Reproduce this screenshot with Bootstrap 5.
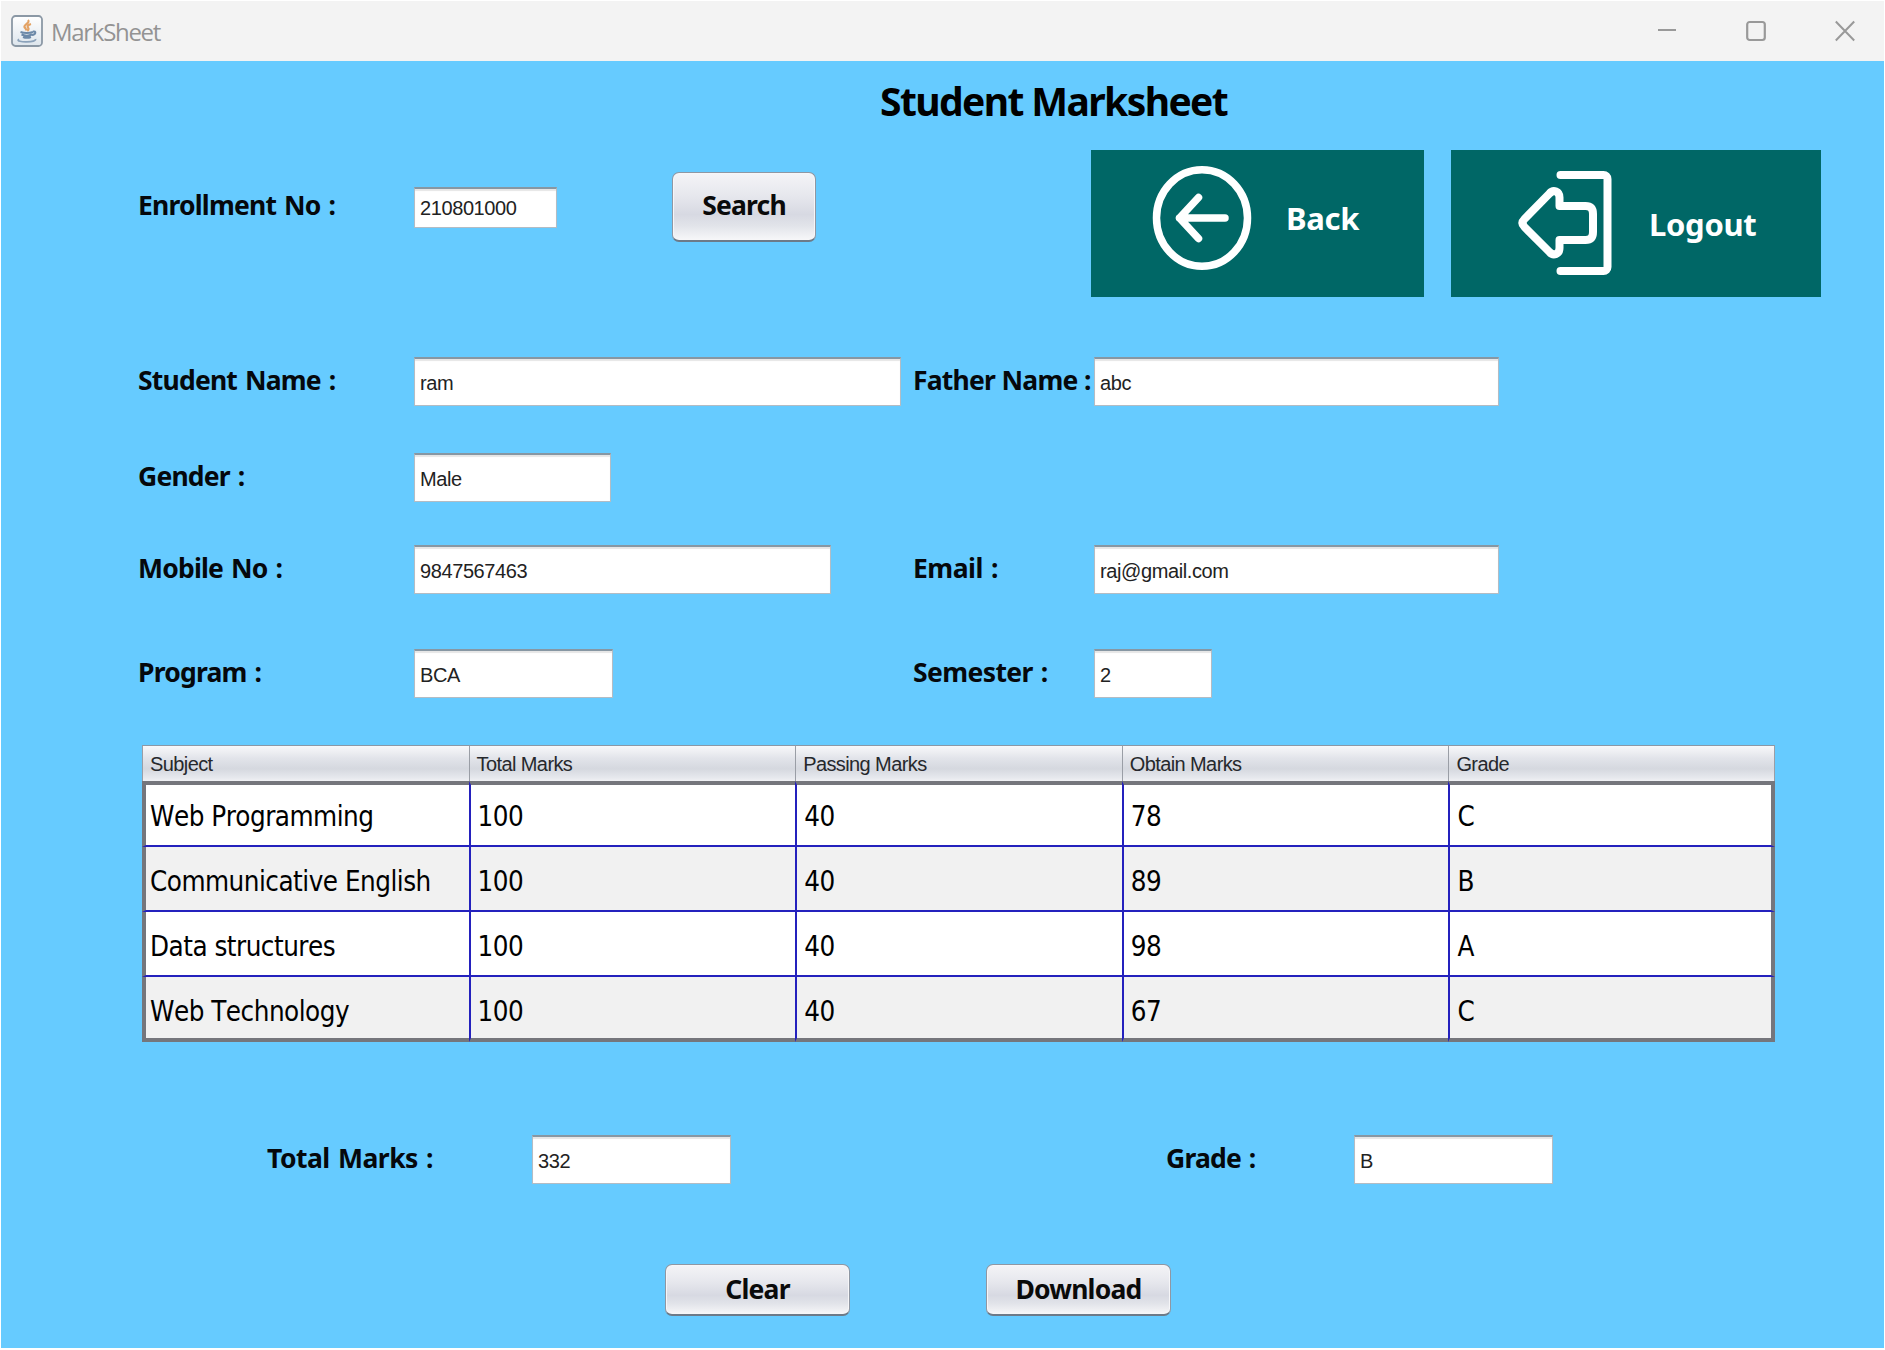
<!DOCTYPE html>
<html lang="en">
<head>
<meta charset="utf-8">
<title>MarkSheet</title>
<meta name="viewport" content="width=device-width, initial-scale=1">
<link href="https://cdn.jsdelivr.net/npm/bootstrap@5.3.0/dist/css/bootstrap.min.css" rel="stylesheet">
<style>
  body { background: #fff; font-family: "Noto Sans", "Open Sans", sans-serif; color: #05080c; overflow: hidden; }
  .app-window { width: 1885px; height: 1350px; padding: 1px 1px 2px 1px; }
  .title-bar { height: 60px; background: #f3f3f3; padding: 0 13px 0 10px; color: #939393; }
  .title-bar .app-name { font: 24px/30px "Open Sans", sans-serif; letter-spacing: -1.3px; margin-left: 8px; padding-top: 1px; }
  .win-controls { gap: 69px; }
  .form-area { background: #66cbff; padding-left: 137px; }
  .page-title { font-size: 39px; font-weight: 700; line-height: 50px; letter-spacing: -1.6px; margin: 15px 0 0 742px; white-space: nowrap; color: #000; }
  .lbl { flex: none; font-size: 26.5px; font-weight: 700; line-height: 30px; letter-spacing: -.8px; word-spacing: 1.8px; padding-bottom: 4px; white-space: nowrap; }
  .lbl-a { width: 276px; }
  .lbl-b { width: 181px; }
  .lbl-tight { word-spacing: .5px; }
  .col-a { width: 775px; }
  .form-control.field {
    flex: none; height: 49px; border-radius: 0; padding: 3px 5px 0; background: #fff; color: #222;
    border: 1px solid #b3bcc4; border-top: 2px solid #8797a3; box-shadow: inset 0 2px 1px #e6e6e6;
    font: 20px/24px "Liberation Sans", Arial, sans-serif; letter-spacing: -.4px;
  }
  .w-enroll { width: 143px; } .w-name { width: 487px; } .w-gender { width: 197px; } .w-mobile { width: 417px; }
  .w-short { width: 199px; } .w-wide { width: 405px; } .w-sem { width: 118px; }
  .btn.metal {
    flex: none; border: 1px solid #8f97a3; border-bottom: 2px solid #6d7a88; border-radius: 7px; padding: 0 0 2px;
    font-size: 26.5px; font-weight: 700; letter-spacing: -.8px; line-height: 30px; color: #0a0a0a;
    background: linear-gradient(#f4f4f7 0%, #e6e7ed 35%, #d7d9e2 62%, #e1e3e9 78%, #f7f7f9 100%);
    box-shadow: inset 0 0 0 1px #f6f6f8;
  }
  .btn.teal { flex: none; height: 147px; border: 0; border-radius: 0; padding: 0; background: #006766; color: #fff; font-size: 31px; font-weight: 700; line-height: 40px; letter-spacing: -.3px; }
  .btn-back { width: 333px; }
  .btn-logout { width: 370px; margin-left: 27px; }
  .marks { width: 1633px; margin: 47px 0 0 4px; table-layout: fixed; border-collapse: separate; border-spacing: 0; }
  .marks th {
    height: 36px; padding: 1px 0 0 7px; border-top: 1px solid #8b98a6; border-left: 1px solid #9a9ea6;
    font: 20px/24px "Liberation Sans", Arial, sans-serif; letter-spacing: -.6px; color: #26282c;
    background: linear-gradient(#f8f8fa 0%, #e2e4ea 35%, #d5d8df 65%, #e6e8ed 90%, #f0f1f4 100%);
  }
  .marks th:last-child { border-right: 1px solid #9a9ea6; }
  .marks td {
    height: 65px; padding: 5px 0 0 7px; border-left: 2px solid #2421bd; border-bottom: 2px solid #2421bd;
    font: 27.5px/34px "DejaVu Sans Condensed", "DejaVu Sans", sans-serif; font-stretch: condensed; font-kerning: none; letter-spacing: -.5px; color: #000; background: #fff; white-space: nowrap;
  }
  .marks tbody tr:nth-child(even) td { background: #f1f1f1; }
  .marks tbody tr:first-child td { border-top: 4px solid #75767c; height: 66px; padding-top: 2px; }
  .marks tbody tr:last-child td { border-bottom: 4px solid #75767c; padding-top: 6px; }
  .marks td:first-child { border-left: 4px solid #75767c; padding-left: 4px; }
  .marks td:last-child { border-right: 4px solid #75767c; }
</style>
</head>
<body>
<div class="app-window d-flex flex-column">
  <header class="title-bar d-flex align-items-center flex-shrink-0">
    <svg width="32" height="32" viewBox="0 0 32 32" fill="none">
      <defs><linearGradient id="tile" x1="0" y1="0" x2="0" y2="1"><stop stop-color="#fff"/><stop offset="1" stop-color="#dde5ec"/></linearGradient></defs>
      <rect x="1" y="1" width="30" height="30" rx="3.5" fill="url(#tile)" stroke="#8b98a5" stroke-width="1.8"/>
      <path d="M17 5c2.500 3-4.500 4.500-3.500 7 .5 1.200 1.800 1.800 1.700 3.500M20 9c-3.500 1-4 2.500-2.800 4 1 1.200-.2 2.200-1 2.700" stroke="#e3a264" stroke-width="2.200"/>
      <path d="M9.500 17c4 1.200 8.500 1.200 12.500 0M10.500 19.500c3 1.300 7.500 1.300 10.500 0M12 22c2.500 1 5.500 1 8 0M22 16.500c3.500-.8 3 3-1 3.500" stroke="#6c89a8" stroke-width="2"/>
      <path d="M8 24.200c-3 1.800 3 2.800 8 2.600 5 0 9-1 8.500-2.800" stroke="#8ba2ba" stroke-width="1.800"/>
    </svg>
    <span class="app-name">MarkSheet</span>
    <div class="win-controls d-flex align-items-center ms-auto pe-3">
      <svg width="20" height="22" viewBox="0 0 20 22"><path d="M1 10h18" stroke="#999" stroke-width="2"/></svg>
      <svg width="20" height="22" viewBox="0 0 20 22"><rect x="1.200" y="2" width="17.600" height="18" rx="2.500" fill="none" stroke="#999" stroke-width="2.200"/></svg>
      <svg width="20" height="22" viewBox="0 0 20 22"><path d="M.8 1.500l18.400 19M19.200 1.500l-18.400 19" stroke="#999" stroke-width="2"/></svg>
    </div>
  </header>

  <main class="form-area flex-grow-1">
    <h1 class="page-title">Student Marksheet</h1>

    <div class="d-flex align-items-start" style="margin-top:24px">
      <div class="d-flex align-items-center" style="height:116px;width:953px">
        <label class="lbl lbl-a" for="enroll" style="padding-bottom:6px">Enrollment No :</label>
        <input id="enroll" class="form-control field w-enroll" style="height:41px;padding-top:0;margin-top:-1px" value="210801000">
        <button class="btn metal" style="width:144px;height:70px;margin-left:115px;margin-top:-3px">Search</button>
      </div>
      <button class="btn teal btn-back d-flex">
        <svg width="195" height="147" viewBox="0 0 195 147" fill="none" stroke="#fff" stroke-linecap="round" stroke-linejoin="round">
          <ellipse cx="111" cy="68" rx="45.500" ry="48.300" stroke-width="7.500"/>
          <path d="M107.500 47.500L88.500 68l19 20.500M88.500 68h45.500" stroke-width="7.500"/>
        </svg>
        <span style="margin-top:48px">Back</span>
      </button>
      <button class="btn teal btn-logout d-flex">
        <svg width="198" height="147" viewBox="0 0 198 147" fill="none" stroke="#fff" stroke-width="8" stroke-linecap="round" stroke-linejoin="round">
          <path d="M109.500 25h43a4 4 0 0 1 4 4v88a4 4 0 0 1-4 4h-43"/>
          <path d="M73.500 69L98.500 43.500c4-4.500 10-2 10 4V56h26q7.500 0 7.500 8v18q0 8-7.500 8h-26v8c0 6-6 8.500-10 4L73.500 77q-4-4 0-8z"/>
        </svg>
        <span style="margin-top:54px">Logout</span>
      </button>
    </div>

    <div class="d-flex align-items-center" style="margin-top:60px">
      <div class="col-a d-flex align-items-center"><label class="lbl lbl-a" for="sname">Student Name :</label><input id="sname" class="form-control field w-name" value="ram"></div>
      <label class="lbl lbl-b lbl-tight" for="fname">Father Name :</label><input id="fname" class="form-control field w-wide" value="abc">
    </div>
    <div class="d-flex align-items-center" style="margin-top:47px">
      <label class="lbl lbl-a" for="gender">Gender :</label><input id="gender" class="form-control field w-gender" value="Male">
    </div>
    <div class="d-flex align-items-center" style="margin-top:43px">
      <div class="col-a d-flex align-items-center"><label class="lbl lbl-a" for="mobile">Mobile No :</label><input id="mobile" class="form-control field w-mobile" value="9847567463"></div>
      <label class="lbl lbl-b" for="email" style="letter-spacing:-.5px">Email :</label><input id="email" class="form-control field w-wide" value="raj@gmail.com">
    </div>
    <div class="d-flex align-items-center" style="margin-top:55px">
      <div class="col-a d-flex align-items-center"><label class="lbl lbl-a" for="program">Program :</label><input id="program" class="form-control field w-short" value="BCA"></div>
      <label class="lbl lbl-b" for="semester" style="letter-spacing:-.6px">Semester :</label><input id="semester" class="form-control field w-sem" value="2">
    </div>

    <table class="marks">
      <thead><tr><th>Subject</th><th>Total Marks</th><th>Passing Marks</th><th>Obtain Marks</th><th>Grade</th></tr></thead>
      <tbody>
        <tr><td>Web Programming</td><td>100</td><td>40</td><td>78</td><td>C</td></tr>
        <tr><td>Communicative English</td><td>100</td><td>40</td><td>89</td><td>B</td></tr>
        <tr><td>Data structures</td><td>100</td><td>40</td><td>98</td><td>A</td></tr>
        <tr><td>Web Technology</td><td>100</td><td>40</td><td>67</td><td>C</td></tr>
      </tbody>
    </table>

    <div class="d-flex align-items-center" style="margin:93px 0 0 129px">
      <label class="lbl" for="total" style="width:265px;letter-spacing:-.5px">Total Marks :</label><input id="total" class="form-control field w-short" value="332">
      <label class="lbl" for="grade" style="margin-left:435px;width:188px">Grade :</label><input id="grade" class="form-control field w-short" value="B">
    </div>
    <div class="d-flex" style="margin:80px 0 0 527px;gap:136px">
      <button class="btn metal" style="width:185px;height:52px">Clear</button>
      <button class="btn metal" style="width:185px;height:52px">Download</button>
    </div>
  </main>
</div>
<script src="https://cdn.jsdelivr.net/npm/bootstrap@5.3.0/dist/js/bootstrap.bundle.min.js"></script>
</body>
</html>
